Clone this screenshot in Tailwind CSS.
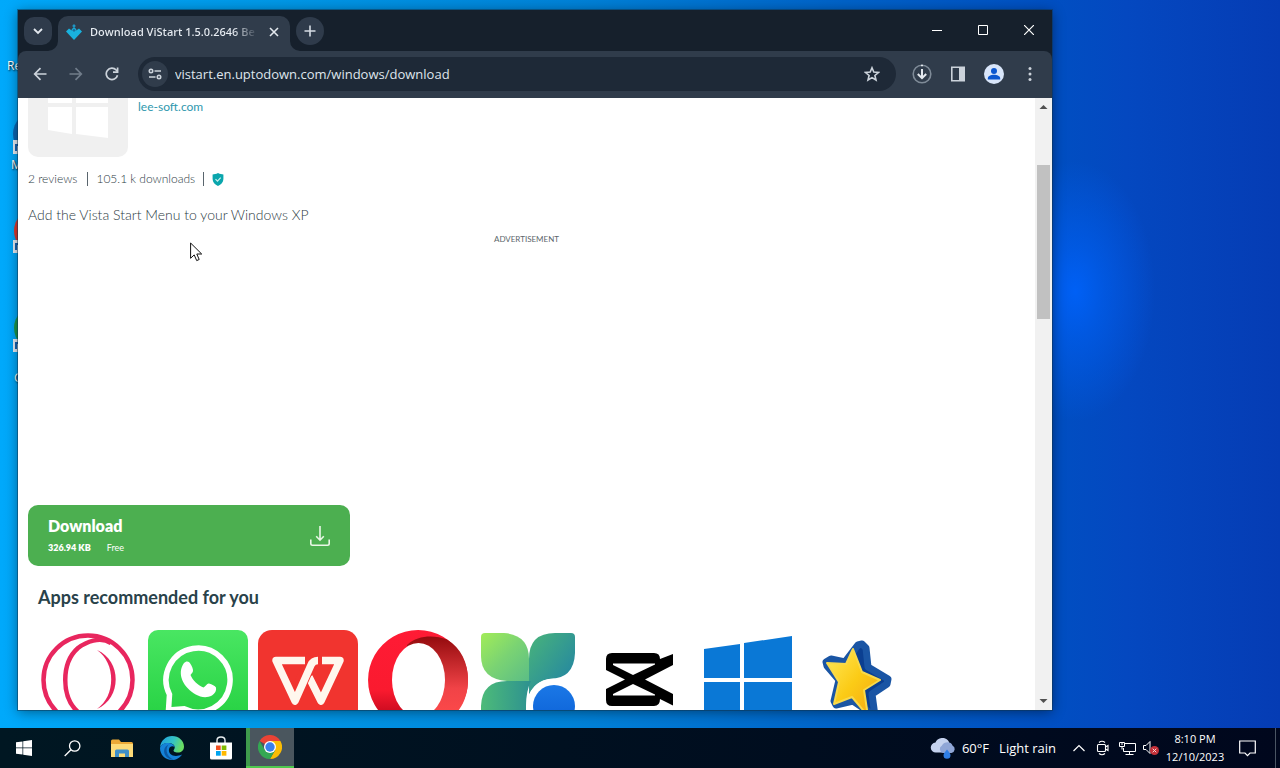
<!DOCTYPE html>
<html lang="en">
<head>
  <meta charset="UTF-8" />
  <meta name="viewport" content="width=device-width, initial-scale=1.0"/>
  <title>Download ViStart 1.5.0.2646 Beta</title>
  <script src="https://cdn.jsdelivr.net/npm/@tailwindcss/browser@4"></script>
</head>
<body class="h-screen flex flex-col overflow-hidden bg-[#0446bd] font-['Open_Sans','Noto_Sans',sans-serif]">

  <!-- Desktop -->
  <main class="relative flex-1 min-h-0 overflow-hidden bg-[radial-gradient(ellipse_80px_130px_at_84%_40%,#0060f5_0%,#0060f599_35%,#0060f500_100%),linear-gradient(90deg,#00a9fb_0%,#0099e8_20%,#0082d8_45%,#0062c8_66%,#004fc2_82%,#0448c0_88%,#053cb4_100%)]">

    <!-- Desktop shortcuts, mostly behind the window -->
    <span class="absolute left-[7px] top-[58px] text-xs leading-4 text-white text-shadow-[1px_1px_2px_#000]">Re</span>
    <svg class="absolute left-3 top-[112px]" width="60" height="44" viewBox="0 0 60 44"><circle cx="24" cy="22" r="23" fill="#0a66b4"/><path d="M1 28h12v14H1z" fill="#e8eef5"/><path d="M4 39v-6h4" stroke="#1763b5" stroke-width="2" fill="none"/></svg>
    <span class="absolute left-[11px] top-[157px] text-xs leading-4 text-white text-shadow-[1px_1px_2px_#000]">M</span>
    <svg class="absolute left-3 top-[212px]" width="60" height="44" viewBox="0 0 60 44"><circle cx="25" cy="19" r="23" fill="#e0382c"/><path d="M1 28h12v13H1z" fill="#e8eef5"/><path d="M4 38v-6h4" stroke="#1763b5" stroke-width="2" fill="none"/></svg>
    <svg class="absolute left-3 top-[308px]" width="60" height="46" viewBox="0 0 60 46"><circle cx="24" cy="20" r="22" fill="#1c9a4c"/><path d="M1 31h12v13H1z" fill="#e8eef5"/><path d="M4 41v-6h4" stroke="#1763b5" stroke-width="2" fill="none"/></svg>
    <span class="absolute left-[14px] top-[370px] text-xs leading-4 text-white text-shadow-[1px_1px_2px_#000]">G</span>

    <!-- Browser window -->
    <section class="absolute left-[18px] right-[228px] top-[10px] bottom-[18px] flex flex-col bg-[#16202c] shadow-[0_2px_12px_rgba(0,0,0,0.45)] outline outline-[#0d3350]/50">
      <!-- Tab strip -->
      <header class="flex items-stretch h-[41px] shrink-0">
        <button aria-label="Search tabs" class="self-center ml-1.5 size-7 rounded-[10px] bg-[#2f3b4b] flex items-center justify-center">
          <svg width="10" height="8" viewBox="0 0 10 8" fill="none" stroke="#e3e8ee" stroke-width="1.800"><path d="M1 2l4 4 4-4"/></svg>
        </button>
        <div class="relative ml-1.5 mt-1.5 w-[232px] rounded-t-[10px] bg-[#303c4b] flex items-center px-2 pb-1">
          <svg class="absolute -left-2.5 bottom-0" width="10" height="10" viewBox="0 0 10 10" fill="#303c4b"><path d="M10 0v10H0A10 10 0 0 0 10 0z"/></svg>
          <svg class="absolute -right-2.5 bottom-0" width="10" height="10" viewBox="0 0 10 10" fill="#303c4b"><path d="M0 0v10h10A10 10 0 0 1 0 0z"/></svg>
          <svg width="16" height="16" viewBox="0 0 16 16" fill="#19b2de"><path d="M0 7.500l3-3 2.700 2V5.300L8 3l2.300 2.300v1.200l2.700-2 3 3L8 16z"/><path d="M8 0l1.900 1.900L8 3.800 6.100 1.900z" fill="#1f95c4"/><path d="M8 4.500l1.800 1.800L8 8.100 6.200 6.300z" fill="#1a6f9b"/></svg>
          <span class="ml-2 flex-1 overflow-hidden whitespace-nowrap text-[11px] font-semibold leading-4 text-transparent bg-clip-text bg-linear-to-r from-[#e8edf3] from-85% to-transparent">Download ViStart 1.5.0.2646 Be</span>
          <button aria-label="Close tab" class="ml-2 size-4 flex items-center justify-center">
            <svg width="10" height="10" viewBox="0 0 10 10" stroke="#e3e8ee" stroke-width="1.600"><path d="M1 1l8 8M9 1L1 9"/></svg>
          </button>
        </div>
        <button aria-label="New tab" class="self-center ml-1.5 size-7 rounded-full bg-[#2f3b4b] flex items-center justify-center">
          <svg width="12" height="12" viewBox="0 0 12 12" stroke="#d5dce4" stroke-width="1.600"><path d="M6 .5v11M.5 6h11"/></svg>
        </button>
        <div class="ml-auto flex pb-px text-white">
          <button aria-label="Minimize" class="w-[46px] flex items-center justify-center"><svg width="10" height="10" viewBox="0 0 10 10" stroke="currentColor"><path d="M0 5.500h10"/></svg></button>
          <button aria-label="Maximize" class="w-[46px] flex items-center justify-center"><svg width="10" height="10" viewBox="0 0 10 10" stroke="currentColor" fill="none"><path d="M.5.5h9v9h-9z"/></svg></button>
          <button aria-label="Close" class="w-[46px] flex items-center justify-center"><svg width="10" height="10" viewBox="0 0 10 10" stroke="currentColor" stroke-width="1.200"><path d="M0 0l10 10M10 0L0 10"/></svg></button>
        </div>
      </header>

      <!-- Toolbar -->
      <nav class="flex items-center h-[47px] shrink-0 rounded-t-lg bg-[#303c4b] text-[#ccd3db] px-1 pb-px">
        <button aria-label="Back" class="w-9 h-8 flex items-center justify-center"><svg width="14" height="14" viewBox="0 0 14 14" fill="none" stroke="currentColor" stroke-width="1.700"><path d="M13.500 7H2M7.500 1.200L1.700 7l5.800 5.800"/></svg></button>
        <button aria-label="Forward" class="w-9 h-8 flex items-center justify-center text-[#717d8b]"><svg width="14" height="14" viewBox="0 0 14 14" fill="none" stroke="currentColor" stroke-width="1.700"><path d="M.5 7H12M6.500 1.200L12.300 7l-5.800 5.800"/></svg></button>
        <button aria-label="Reload" class="w-9 h-8 flex items-center justify-center"><svg width="14" height="14" viewBox="0 0 14 14" fill="none" stroke="currentColor" stroke-width="1.700"><path d="M12.500 8.200A5.700 5.700 0 1 1 11.200 3l1.300 1.500"/><path d="M12.600.5v4.600H8"/></svg></button>
        <div class="ml-2 flex-1 h-[34px] rounded-full bg-[#1e2937] flex items-center pl-1 pr-3">
          <button aria-label="Site information" class="size-[26px] rounded-full bg-[#303c4b] flex items-center justify-center">
            <svg width="14" height="12" viewBox="0 0 14 12" fill="none" stroke="currentColor" stroke-width="1.600"><circle cx="3" cy="3" r="1.700"/><path d="M6.500 3H13M1 9h6.500"/><circle cx="11" cy="9" r="1.700"/></svg>
          </button>
          <input type="text" aria-label="Address" value="vistart.en.uptodown.com/windows/download" class="ml-[7px] flex-1 min-w-0 bg-transparent outline-none text-[13px] leading-5 text-[#dfe5ec]"/>
          <button aria-label="Bookmark this tab" class="size-6 flex items-center justify-center"><svg width="16" height="16" viewBox="0 0 16 16" fill="none" stroke="currentColor" stroke-width="1.600"><path d="M8 1.800l1.800 4.300 4.600.4-3.500 3 1.100 4.500L8 11.600 4 14l1.100-4.500-3.500-3 4.600-.4z"/></svg></button>
        </div>
        <div class="ml-2 flex">
          <button aria-label="Downloads" class="w-9 h-8 flex items-center justify-center"><svg width="20" height="20" viewBox="0 0 20 20" fill="none" stroke="currentColor"><circle cx="10" cy="10" r="8.800" stroke="#7f8b98" stroke-width="1.600"/><path d="M10 .7v1.500M10 5v9M5.800 10l4.200 4.200 4.200-4.200" stroke="#e3e8ee" stroke-width="2"/></svg></button>
          <button aria-label="Side panel" class="w-9 h-8 flex items-center justify-center"><svg width="16" height="16" viewBox="0 0 16 16"><path d="M1.800 1.300h12.400v13.400H1.800z" fill="none" stroke="currentColor" stroke-width="1.600"/><path d="M9 1h5.500v14H9z" fill="currentColor"/></svg></button>
          <button aria-label="Profile" class="w-9 h-8 flex items-center justify-center"><svg width="20" height="20" viewBox="0 0 20 20"><circle cx="10" cy="10" r="10" fill="#d9e6fa"/><circle cx="10" cy="7" r="3" fill="#0b57d0"/><path d="M3.800 14.600c0-5 12.400-5 12.400 0v1H3.800z" fill="#0b57d0"/></svg></button>
          <button aria-label="Menu" class="w-9 h-8 flex items-center justify-center"><svg width="4" height="16" viewBox="0 0 4 16" fill="currentColor"><circle cx="2" cy="2.500" r="1.500"/><circle cx="2" cy="8" r="1.500"/><circle cx="2" cy="13.500" r="1.500"/></svg></button>
        </div>
      </nav>

      <!-- Web page -->
      <div class="flex flex-1 min-h-0 bg-white">
        <article class="flex-1 min-w-0 overflow-hidden font-['Lato','Open_Sans',sans-serif] text-[#2c3a43]">
          <div class="-mt-[41px] pl-2.5 flex items-center gap-2.5">
            <svg width="100" height="100" viewBox="0 0 100 100"><rect width="100" height="100" rx="10" fill="#f0f0f0"/><g fill="#fff"><path d="M20 28l24-4v22H20zM48 23l32-5v28H48zM20 50h24v27l-24-4zM48 50h32v31l-32-4z"/></g></svg>
            <a href="#" class="text-xs leading-5 text-[#2f98ae]">lee-soft.com</a>
          </div>
          <div class="mt-3 pl-2.5 h-5 flex items-center text-xs leading-5 font-light">
            <span class="pr-2.5">2 reviews</span>
            <span class="border-l border-[#59656d] h-3.5 leading-3.5 px-2">105.1 k downloads</span>
            <span class="border-l border-[#59656d] h-3.5 pl-2 flex items-center"><svg width="12" height="13" viewBox="0 0 12 13"><path d="M6 0c2 1 3.700 1.400 5.400 1.500V6c0 3.300-2.300 5.800-5.400 7C2.900 11.800.6 9.300.6 6V1.500C2.300 1.400 4 1 6 0z" fill="#0ba6ad"/><path d="M3.500 6.200l2 2 3.200-3.600" fill="none" stroke="#c9f1ef" stroke-width="1.200"/></svg></span>
          </div>
          <p class="mt-4 pl-2.5 text-sm leading-5 font-light">Add the Vista Start Menu to your Windows XP</p>
          <div class="mt-1 h-[276px] pt-1 text-center text-[8px] leading-3 text-[#5c666c]">ADVERTISEMENT</div>
          <button class="ml-2.5 w-[322px] h-[61px] rounded-[10px] bg-[#4caf50] text-white flex items-center justify-between px-5 pt-px text-left">
            <span>
              <span class="block text-base leading-5 font-extrabold">Download</span>
              <span class="block mt-1 text-[9px] leading-4"><b class="font-extrabold">326.94 KB</b><span class="ml-4">Free</span></span>
            </span>
            <svg width="20" height="20" viewBox="0 0 20 20" fill="none" stroke="#e9f7e6" stroke-width="1.600"><path d="M10 0v14M6.200 10.300L10 14.200l3.800-3.900M.8 13.500v4q0 1.700 1.700 1.700h15q1.700 0 1.700-1.700v-4"/></svg>
          </button>
          <h2 class="mt-[19px] pl-5 text-lg leading-6 font-bold text-[#29424a]">Apps recommended for you</h2>
          <ul class="mt-[21px] pl-5 flex gap-2.5">
            <li class="shrink-0"><svg width="100" height="100" viewBox="0 0 100 100" fill="none" stroke="#e8265e" stroke-width="4.500"><circle cx="50" cy="50" r="44.500"/><path d="M73 13C62 6 48 12 40 18c-17 15-17 49 0 64 8 6 22 12 33 5"/><path d="M59 20c25 11 25 48 0 59 19-13 19-46 0-59z" fill="#e8265e" stroke="none"/></svg></li>
            <li class="shrink-0"><svg width="100" height="100" viewBox="0 0 100 100"><defs><linearGradient id="wa" x2="0" y2="1"><stop stop-color="#49e662"/><stop offset="1" stop-color="#22cf3f"/></linearGradient></defs><rect width="100" height="100" rx="10" fill="url(#wa)"/><path d="M20.500 80l1-15.500A32 32 0 1 1 36 78.800z" fill="none" stroke="#fff" stroke-width="5.500"/><path d="M36 33c1.500-1.700 3.500-2 5-1 2 2 3.500 5 4 8 .3 2-1.300 3.500-2.500 5 2 5 7 10 13 12.500 2-1 3.600-4.500 5.500-4 3 .5 6 2.500 7 4 .7 3-1 6-4 8-9 4.500-18-1-24-7S29.500 42 36 33z" fill="#fff"/></svg></li>
            <li class="shrink-0"><svg width="100" height="100" viewBox="0 0 100 100"><rect width="100" height="100" rx="14" fill="#f1342f"/><g fill="none" stroke="#fff7ee" stroke-width="7.500" stroke-linejoin="round"><path d="M64 30.500h18L63 71 51 47"/><path d="M55 26L37 66" stroke="#f1342f" stroke-width="13"/><path d="M47 30.500H18L37 71l16-36q2-4.500 7-4.500"/></g></svg></li>
            <li class="shrink-0"><svg width="100" height="100" viewBox="0 0 100 100"><defs><linearGradient id="op1" x2="0" y2="1"><stop stop-color="#ff1b35"/><stop offset=".6" stop-color="#fa1a2f"/><stop offset="1" stop-color="#a70014"/></linearGradient><linearGradient id="op2" x2="0" y2="1"><stop stop-color="#940b0e"/><stop offset=".6" stop-color="#f14347"/><stop offset="1" stop-color="#ff4b4b"/></linearGradient></defs><path d="M50 0a50 50 0 1 0 .1 0z" fill="url(#op1)"/><path d="M39 15C50 5 66 5 79 9.500 93 18 100 33 100 50s-7 32-21 41c-13 4-29 3-40-6z" fill="url(#op2)"/><ellipse cx="50.500" cy="50" rx="26.500" ry="37" fill="#fff"/></svg></li>
            <li class="shrink-0"><svg width="100" height="100" viewBox="0 0 100 100"><defs><linearGradient id="l1" x2="1" y2="1"><stop stop-color="#a2ec58"/><stop offset=".5" stop-color="#7ad373"/><stop offset="1" stop-color="#5bbd86"/></linearGradient><linearGradient id="l2" x2="1" y2="1"><stop stop-color="#49b47a"/><stop offset="1" stop-color="#1e7fa8"/></linearGradient><linearGradient id="l3" x2="1" y2="0"><stop stop-color="#4dbb79"/><stop offset="1" stop-color="#2d9190"/></linearGradient><linearGradient id="l4" x2="0" y2="1"><stop stop-color="#1b78e6"/><stop offset="1" stop-color="#0a5fd6"/></linearGradient></defs><path d="M51 51V29Q51 3 77 3h16q4 0 4 4v16q-1 26-26 26-14 2-20 16z" fill="url(#l2)"/><path d="M29 51h24q-5 10-5 25v21H7q-4 0-4-4V76q1-25 26-25z" fill="url(#l3)"/><path d="M7 3h19q25 2 25 26v22H29Q3 49 3 26V7q0-4 4-4z" fill="url(#l1)"/><circle cx="76" cy="76" r="27.500" fill="#fff"/><rect x="55" y="55" width="42" height="42" rx="21" fill="url(#l4)"/></svg></li>
            <li class="shrink-0"><svg width="100" height="100" viewBox="0 0 100 100"><path d="M24 23h42q6 0 6 6l13-5v11L57 49.500 85 64v11.500l-13-6.500q0 7-6 7H24q-6 0-6-6V59l19-9.500L18 40V29q0-6 6-6z"/><path d="M25 33.500h42v1L45 45 25 35zM25 65.500h42v-1L45 54 25 64z" fill="#fff"/></svg></li>
            <li class="shrink-0"><svg width="100" height="100" viewBox="0 0 100 100" fill="#0a78d6"><path d="M6 19l36-5v34H6zM46 13l48-7v42H46zM6 52h36v34L6 81zM46 52h48v42l-48-7z"/></svg></li>
            <li class="shrink-0"><svg width="100" height="100" viewBox="0 0 100 100" stroke-linejoin="round"><defs><linearGradient id="st" x2="1" y2="1"><stop stop-color="#ffe95a"/><stop offset=".5" stop-color="#fbcb16"/><stop offset="1" stop-color="#f4a313"/></linearGradient></defs><path d="M18 32l5-3 14 3L50 15l4-1 4 4 2 19 20 12-1 5-15 10 3 22-22-15-17 4-2-4 5-21-12-14z" fill="#0b3f91" stroke="#1a55a4" stroke-width="7"/><path d="M19 33l19 1 7-15 9 23 18 8-16 10 4 26-16-19-18 7 5-22z" fill="url(#st)" stroke="#f8d94a" stroke-width="2"/></svg></li>
          </ul>
        </article>
        <!-- Scrollbar -->
        <div class="w-[17px] shrink-0 flex flex-col items-center bg-[#f1f1f1]">
          <svg class="shrink-0" width="17" height="17" viewBox="0 0 17 17" fill="#505050"><path d="M4.500 11l4-4 4 4z"/></svg>
          <div class="mt-[50px] w-[13px] h-[154px] bg-[#c1c1c1]"></div>
          <svg class="mt-auto shrink-0" width="17" height="17" viewBox="0 0 17 17" fill="#505050"><path d="M4.500 6l4 4 4-4z"/></svg>
        </div>
      </div>
    </section>

    <!-- Mouse pointer -->
    <svg class="absolute left-[190px] top-[242px]" width="13" height="20" viewBox="0 0 13 20"><path d="M.6 1v15.300l3.600-3.400 2.500 5.700 2.500-1.100-2.400-5.500h4.900z" fill="#fff" stroke="#111"/></svg>
  </main>

  <!-- Taskbar -->
  <footer class="h-10 shrink-0 flex items-stretch text-white bg-linear-to-r from-[#001722] to-[#00071d]">
    <button aria-label="Start" class="w-12 flex items-center justify-center"><svg width="16" height="16" viewBox="0 0 16 16" fill="#fff"><path d="M0 2.300l6.500-.9v6.200H0zM7.200 1.300L16 0v7.600H7.200zM0 8.300h6.500v6.300L0 13.700zM7.200 8.300H16V16l-8.800-1.300z"/></svg></button>
    <button aria-label="Search" class="w-12 flex items-center justify-center"><svg width="17" height="17" viewBox="0 0 17 17" fill="none" stroke="#fff" stroke-width="1.300"><circle cx="10.700" cy="6" r="5.200"/><path d="M7 9.700L.7 16"/></svg></button>
    <button aria-label="File Explorer" class="w-[52px] flex items-center justify-center"><svg width="22" height="19" viewBox="0 0 22 19"><path d="M0 2q0-1.500 1.500-1.500H8L10 3h10.500Q22 3 22 4.500V18H0z" fill="#eba937"/><path d="M0 5h22v13H0z" fill="#fddb78"/><path d="M4 18v-6q0-1.500 1.500-1.500h11Q18 10.500 18 12v6h-4v-3.500H8V18z" fill="#3f8fc9"/></svg></button>
    <button aria-label="Microsoft Edge" class="w-12 flex items-center justify-center">
      <svg width="24" height="24" viewBox="0 0 24 24"><defs><linearGradient id="ed" x2="1" y2=".3"><stop stop-color="#1b9de2"/><stop offset=".6" stop-color="#35c3c4"/><stop offset="1" stop-color="#69dc63"/></linearGradient></defs><path d="M0 11.500C.5 4.500 6 0 12 0c7 0 12 5 12 10.500 0 4-3 6-6 6-3.500 0-5-1.500-4.300-2.600.8-1.200 1-2.100 1-3C14.500 8 10 6.500 6.500 7 3 7.500.5 9.500 0 11.500z" fill="url(#ed)"/><path d="M0 12c.5-3 4-5 7.500-5 4 0 7 2.200 7.200 4.200-1.300-1.400-5-1.700-5.700 2-1 5 5 9 13 5.300C20 22 16 24 12 24 5 24 0 18.500 0 12z" fill="#1583d8"/><path d="M8.800 8.500C5.500 11.500 5 20 14 23.800c-7-.5-10.500-5-9.800-9.800.3-2.500 2-4.500 4.600-5.500z" fill="#0c59a4"/></svg>
    </button>
    <button aria-label="Microsoft Store" class="w-[50px] flex items-center justify-center"><svg width="24" height="24" viewBox="0 0 24 24"><path d="M8 7V4.500Q8 1 12 1t4 3.500V7" fill="none" stroke="#e8edf0" stroke-width="1.400"/><path d="M1 6.500h22V22q0 1.500-1.500 1.500h-19Q1 23.500 1 22z" fill="#fff"/><path d="M7 9.500h4.700v4.500H7z" fill="#f25022"/><path d="M12.700 9.500h4.700v4.500h-4.700z" fill="#7fba00"/><path d="M7 15h4.700v4.700H7z" fill="#00a4ef"/><path d="M12.700 15h4.700v4.700h-4.700z" fill="#ffb900"/></svg></button>
    <button aria-label="Google Chrome" class="w-12 flex items-center justify-center bg-linear-to-r from-[#3f9a4c] from-8% to-[#4a565e] to-8% border-b-2 border-[#4fc84e]">
      <svg width="24" height="24" viewBox="0 0 24 24"><path d="M12 12L1.600 6A12 12 0 0 1 22.400 6z" fill="#ea4335"/><path d="M12 12l0-6h10.400A12 12 0 0 1 12 24l5.200-9z" fill="#fbbc05"/><path d="M1.600 6l5.200 9L12 18l5.200-3L12 24A12 12 0 0 1 1.600 6z" fill="#34a853"/><circle cx="12" cy="12" r="6" fill="#fff"/><circle cx="12" cy="12" r="4.700" fill="#3b7fec"/></svg>
    </button>

    <div class="ml-auto flex items-center">
      <button class="flex items-center text-[13px] leading-5 pr-[11px]">
        <svg width="26" height="22" viewBox="0 0 26 22"><path d="M6 15.500a5 5 0 0 1-.5-10C7 2 10 1 12.500 1c4 0 6.500 2.500 7 6a4.500 4.500 0 0 1-.5 8.500z" fill="#c4d2ee"/><path d="M13 16a4 4 0 0 1-1-7.500c2-4 9-4.500 10.500 0a4 4 0 0 1-1 7.500z" fill="#8fa6d6"/><path d="M17 12.500c2 2.500 3.500 4 3.500 5.800a3.500 3.500 0 0 1-7 0c0-1.800 1.500-3.300 3.500-5.800z" fill="#2f7fe6"/></svg>
        <span class="ml-1.5">60°F</span><span class="ml-2.5">Light rain</span>
      </button>
      <button aria-label="Show hidden icons" class="w-6 flex justify-center"><svg width="12" height="8" viewBox="0 0 12 8" fill="none" stroke="#fff" stroke-width="1.200"><path d="M.5 7L6 1.500 11.500 7"/></svg></button>
      <button aria-label="Meet Now" class="w-6 flex justify-center"><svg width="14" height="16" viewBox="0 0 14 16" fill="none" stroke="#fff" stroke-width="1.100"><rect x="1.500" y="4.500" width="8" height="7" rx="1"/><path d="M9.500 7l2.500-1.500v5L9.500 9M3 2.500q3-2.500 6 0M3 13.500q3 2.500 6 0"/></svg></button>
      <button aria-label="Network" class="w-6 flex justify-center"><svg width="17" height="15" viewBox="0 0 17 15" fill="none" stroke="#fff"><path d="M6 2.500h10.500v8H4.500V7M10.500 10.500v3M6.500 13.500h8M.5 1.500h5v4h-5zM3 5.500v3M2 3h2"/></svg></button>
      <button aria-label="Volume muted" class="w-6 flex justify-center"><svg width="18" height="16" viewBox="0 0 18 16" fill="none" stroke="#fff"><path d="M1.500 5.500H4l4-4v12l-4-4H1.500z"/><circle cx="12.500" cy="10.500" r="4.500" fill="#c32f38" stroke="none"/><path d="M10.700 8.700l3.600 3.600M14.300 8.700l-3.600 3.600" stroke="#f6d6d6"/></svg></button>
      <time class="w-16 text-center text-[11px] leading-[18px]">8:10 PM<br/>12/10/2023</time>
      <button aria-label="Notifications" class="w-10 flex justify-center"><svg width="17" height="17" viewBox="0 0 17 17" fill="none" stroke="#fff" stroke-width="1.200"><path d="M.7 1h15.600v12h-5.300L8.500 15.700 6 13H.7z"/></svg></button>
      <button aria-label="Show desktop" class="ml-2 w-[5px] h-10 border-l border-[#4a5563]"></button>
    </div>
  </footer>

</body>
</html>
